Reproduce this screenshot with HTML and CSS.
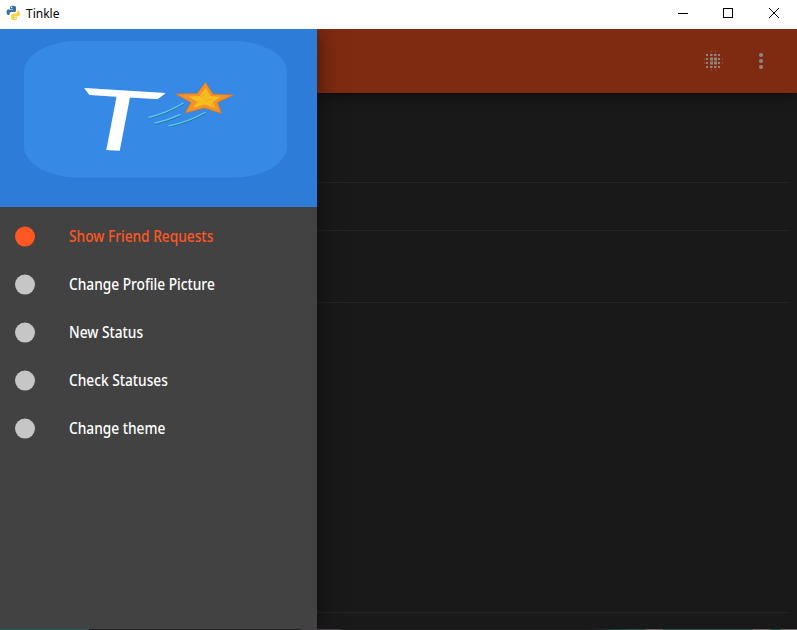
FILE: index.html
```html
<!DOCTYPE html>
<html lang="en">
<head>
<meta charset="utf-8">
<title>Tinkle</title>
<link rel="stylesheet" href="styles.css">
</head>
<body>
<div class="window">
  <header class="titlebar">
    <svg class="app-icon" width="16" height="16" viewBox="0 0 16 16">
      <path d="M4 4V2.500Q4 .8 7 .8T10 2.500V5.500Q10 7 8.500 7H5Q3.500 7 3.500 9V10H2Q.5 9.500.5 7T2 4.500H7V4Z" transform="translate(1)" fill="#3470a2"/>
      <path d="M12 12V13.500Q12 15.200 9 15.200T6 13.500V10Q6 8.500 7.500 8.500H10.500Q12 8.500 12 7V5.500H13.500Q15 6 15 8.500T13.500 11.500H9V12Z" fill="#fbd44d"/>
      <circle cx="6.600" cy="2.500" r=".7" fill="#fff"/><circle cx="10.400" cy="13.400" r=".7" fill="#fff"/>
    </svg>
    <span class="window-title">Tinkle</span>
    <svg class="window-controls" width="137" height="28" viewBox="0 0 137 28" fill="none" stroke="#000" shape-rendering="crispEdges">
      <path d="M18 13.500H28M63.500 8.500H72.500V17.500H63.500Z"/>
      <path d="M109 8L119 18M119 8L109 18" shape-rendering="auto"/>
    </svg>
  </header>
  <div class="screen">
    <aside class="drawer">
      <div class="banner">
        <svg width="317" height="178" viewBox="0 29 317 178">
          <defs>
            <clipPath id="bar"><path d="M83 86.500L90 95.700L100 160H125L156.500 100L166 93V86Z"/></clipPath>
          </defs>
          <rect x="24" y="41" width="263" height="136.500" rx="54" ry="31" fill="#368ae6"/>
          <g clip-path="url(#bar)"><text class="mark" transform="matrix(1.434 .089 -.167 .872 69.300 147.800)">T</text></g>
          <g fill="none" stroke-linecap="round">
            <path d="M149 118Q167 114 183 104.500M155 124Q168 121.300 180 115.900M169 126.500Q187 123.500 205 113.700" stroke="#237a9c" stroke-width="1.400"/>
            <path d="M149 117.300Q167 113 183 103.300M155 123.200Q168 120.300 180 114.700M169 125.800Q187 122.500 205 112.500" stroke="#61cdec" stroke-width="1.300"/>
          </g>
          <path d="M205.500 82.500L213 94L233.500 95L217.500 102.500L221.500 113.500L204.500 108L185 113L191 102.500L175.500 94L197 93.500Z" fill="#f29229" stroke="#c9762b" stroke-width=".8"/>
          <path d="M205.500 88L210.500 96L221 97L212.500 102L215.500 108L204.500 104.500L193 108L197 101.500L188 96.500L200 96Z" fill="#f5bd20"/>
          <path d="M201 97L205 94M206 101L212 99M196 104L199 101M205 98V99M211 104L213 106" stroke="#e5ab1e" stroke-width="1"/>
        </svg>
      </div>
      <nav class="menu">
        <a class="item active"><i class="dot"></i><span class="label">Show Friend Requests</span></a>
        <a class="item"><i class="dot"></i><span class="label">Change Profile Picture</span></a>
        <a class="item"><i class="dot"></i><span class="label">New Status</span></a>
        <a class="item"><i class="dot"></i><span class="label">Check Statuses</span></a>
        <a class="item"><i class="dot"></i><span class="label">Change theme</span></a>
      </nav>
    </aside>
    <main class="content">
      <div class="toolbar">
        <svg width="80" height="64" viewBox="700 29 80 64" fill="#8c8580">
          <g fill="none" stroke="#8c8580">
            <path d="M706 55H708M710 55H712.500M714 55H716.500M718 55H720M706 67H708M710 67H712.500M714 67H716.500M718 67H720M706 59H708M718 59H720M706 63H708M718 63H720" stroke-width="2"/>
            <path d="M710 59H713M714 59H717M710 63H713M714 63H717" stroke-width="3"/>
            <path d="M711 51.500H712M715 51.500H716M711 70H712M715 70H716M704 59H705M722 59H723M704 63H705M722 63H723" stroke-width="1.500" opacity=".5"/>
          </g>
          <circle cx="761" cy="55" r="2.100"/><circle cx="761" cy="61" r="2.100"/><circle cx="761" cy="67" r="2.100"/>
        </svg>
      </div>
      <div class="row first"></div>
      <div class="row second"></div>
      <div class="row third"></div>
      <div class="row rest"></div>
    </main>
  </div>
  <div class="bottom-edge"></div>
</div>
</body>
</html>
```
FILE: styles.css
```css
* { box-sizing: border-box; }
body { margin: 0; font-family: "Noto Sans", sans-serif; background: #191919; }
.window { width: 797px; height: 630px; display: flex; flex-direction: column; overflow: hidden; }
.titlebar { height: 29px; flex: none; display: flex; align-items: flex-start; background: #fff; }
.app-icon { margin: 5px 0 0 5px; }
.window-title { margin-left: 5px; font-size: 12px; line-height: 28px; color: #000; }
.window-controls { margin-left: auto; }
.screen { flex: 1; display: flex; min-height: 0; overflow: hidden; }
.drawer { width: 317px; flex: none; background: #424242; box-shadow: 0 0 22px #0008; z-index: 1; }
.banner { height: 178px; background: #2d7cd8; }
.banner svg { display: block; }
.mark { font: 100px "Liberation Sans", sans-serif; fill: #fff; }
.menu { padding-top: 5px; }
.item { height: 48px; display: flex; align-items: center; padding-left: 15px; color: #fff; }
.dot { width: 20px; height: 20px; border-radius: 50%; background: #c6c6c6; transform: translateY(.6px); }
.label { margin-left: 34px; font-size: 15.5px; font-weight: 500; line-height: 20px; white-space: nowrap; transform: scaleX(.885); transform-origin: left; }
.active { color: #ff5722; }
.active .dot { background: #ff5722; }
.content { flex: 1; display: flex; flex-direction: column; background: #191919; }
.toolbar { height: 64px; flex: none; display: flex; justify-content: flex-end; padding-right: 17px; background: #7f2b11; box-shadow: 0 2px 12px #0008; }
.row { margin-right: 8px; border-bottom: 1px solid #242424; }
.first { height: 90px; }
.second { height: 48px; }
.third { height: 72px; }
.rest { height: 310px; }
.bottom-edge { height: 1px; flex: none; background: linear-gradient(90deg, #285c62 0 89px, #211e20 89px 301px, #454047 301px 341px, #211e20 341px 590px, #285450 630px 645px, #706864 646px 662px, #285450 663px 752px, #706864 753px 770px, #285450 771px 780px, #706864 781px); }
```
